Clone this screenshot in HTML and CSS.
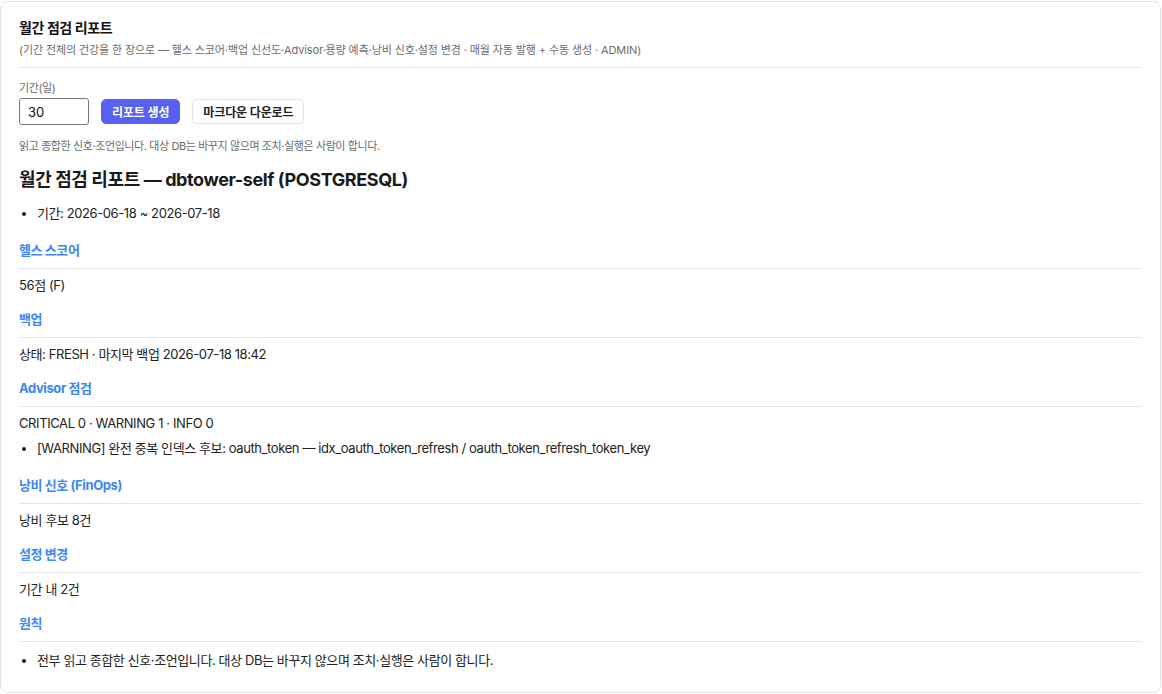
FILE: index.html
```html
<!DOCTYPE html>
<html lang="ko">
<head>
    <meta charset="UTF-8">
    <title>월간 점검 리포트</title>
    <link rel="stylesheet" href="styles.css">
</head>
<body>
    <div class="card">
        <div class="card-head">
            <h2>월간 점검 리포트</h2>
            <p class="sub">(기간 전체의 건강을 한 장으로 — 헬스 스코어·백업 신선도·Advisor·용량 예측·낭비 신호·설정 변경 · 매월 자동 발행 + 수동 생성 · ADMIN)</p>
        </div>

        <label class="field-label" for="days">기간(일)</label>
        <div class="controls">
            <input id="days" type="text" value="30">
            <button class="btn btn-primary">리포트 생성</button>
            <button class="btn">마크다운 다운로드</button>
        </div>
        <p class="note">읽고 종합한 신호·조언입니다. 대상 DB는 바꾸지 않으며 조치·실행은 사람이 합니다.</p>

        <div class="report">
            <h3>월간 점검 리포트 — dbtower-self (POSTGRESQL)</h3>
            <ul>
                <li>기간: 2026-06-18 ~ 2026-07-18</li>
            </ul>

            <h4>헬스 스코어</h4>
            <p>56점 (F)</p>

            <h4>백업</h4>
            <p>상태: FRESH · 마지막 백업 2026-07-18 18:42</p>

            <h4>Advisor 점검</h4>
            <p>CRITICAL 0 · WARNING 1 · INFO 0</p>
            <ul>
                <li>[WARNING] 완전 중복 인덱스 후보: oauth_token — idx_oauth_token_refresh / oauth_token_refresh_token_key</li>
            </ul>

            <h4>낭비 신호 (FinOps)</h4>
            <p>낭비 후보 8건</p>

            <h4>설정 변경</h4>
            <p>기간 내 2건</p>

            <h4>원칙</h4>
            <ul>
                <li>전부 읽고 종합한 신호·조언입니다. 대상 DB는 바꾸지 않으며 조치·실행은 사람이 합니다.</li>
            </ul>
        </div>
    </div>
</body>
</html>
```

FILE: styles.css
```css
body {
    margin: 0;
    padding: 1px 1px 0 0;
    background-color: #fff;
    color: #222;
    font-family: "Inter", "Noto Sans CJK KR", sans-serif;
    letter-spacing: -0.025em;
}
.card {
    border: 1px solid #e3e3e3;
    border-radius: 8px;
    padding: 16px 18px 22px;
}
.card-head {
    border-bottom: 1px solid #e5e5e5;
    padding-bottom: 9px;
}
.card-head h2 {
    margin: 0;
    font-size: 14px;
    line-height: 20px;
    font-weight: 700;
    color: #111;
}
.sub {
    margin: 4px 0 0;
    font-size: 11px;
    line-height: 16px;
    color: #6b6b6b;
    letter-spacing: -0.01em;
}
.field-label {
    display: block;
    margin-top: 12px;
    font-size: 11px;
    line-height: 16px;
    color: #6b6b6b;
}
.controls {
    display: flex;
    align-items: center;
    gap: 12px;
    margin-top: 2px;
}
.controls input {
    box-sizing: border-box;
    width: 70px;
    height: 27px;
    padding: 0 8px;
    border: 1px solid #777;
    border-radius: 3px;
    font-family: inherit;
    font-size: 13px;
    color: #111;
}
.btn {
    height: 25px;
    padding: 0 10px;
    border: 1px solid #e2e2e2;
    border-radius: 5px;
    background-color: #fff;
    color: #222;
    font-family: inherit;
    font-size: 12px;
    font-weight: 700;
    letter-spacing: -0.01em;
    cursor: pointer;
}
.btn-primary {
    background-color: #5661f2;
    border-color: #5661f2;
    color: #fff;
}
.note {
    margin: 13px 0 0;
    font-size: 11px;
    line-height: 16px;
    color: #6b6b6b;
}
.report {
    font-size: 13px;
    line-height: 20px;
}
.report h3 {
    margin: 14px 0 0;
    font-size: 18px;
    line-height: 24px;
    font-weight: 700;
    color: #1a1a1a;
}
.report h4 {
    margin: 14px 0 0;
    padding-bottom: 8px;
    border-bottom: 1px solid #e5e5e5;
    font-size: 13px;
    line-height: 20px;
    font-weight: 700;
    color: #3b87f5;
}
.report h3 + ul {
    margin-top: 11px;
}
.report p {
    margin: 6px 0 0;
}
.report ul {
    margin: 5px 0 17px;
    padding-left: 18px;
}
.report h4 + ul {
    margin-top: 8px;
}
.report > :last-child {
    margin-bottom: 0;
}
```
